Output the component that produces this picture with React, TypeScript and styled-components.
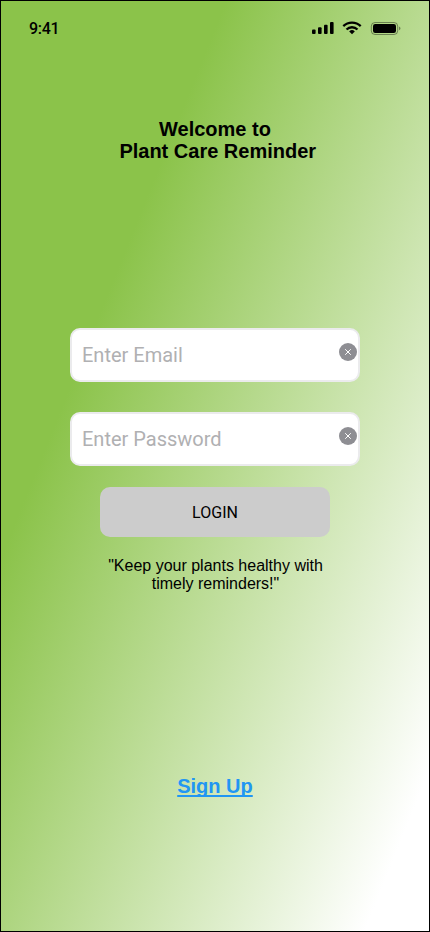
import React from "react";
import styled, { createGlobalStyle } from "styled-components";

const Global = createGlobalStyle`
  *{box-sizing:border-box}
  body{margin:0}
`;
const Screen = styled.main`
  width:430px;height:932px;border:1px solid #000;
  display:flex;flex-direction:column;align-items:center;
  font-family:"Liberation Sans",Arial,sans-serif;color:#000;
  background:linear-gradient(112deg,#8bc34a 28%,#fff 92%);
`;
const StatusBar = styled.header`
  width:100%;height:54px;padding:0 28px;display:flex;align-items:center;justify-content:space-between;
  font:500 16px/20px Roboto,sans-serif;
`;
const Time = styled.span`padding-top:1px;letter-spacing:-.3px;`;
const StatusIcons = styled.svg`display:block;`;
const Title = styled.h1`
  margin:63px 0 0;font-size:20px;line-height:22px;font-weight:700;text-align:center;
`;
const TitleLine = styled.span<{ $indent?: number }>`
  display:block;padding-left:${p => p.$indent ?? 0}px;
`;
const Form = styled.form`margin-top:166px;display:flex;flex-direction:column;align-items:center;`;
const Field = styled.label`
  width:290px;height:54px;margin-bottom:30px;padding:0 1px 0 10px;display:flex;align-items:center;
  border:2px solid #ebebed;border-radius:10px;background:#fff;
`;
const Input = styled.input`
  flex:1;min-width:0;border:0;outline:0;padding:0;background:transparent;font:20px Roboto,sans-serif;
  &::placeholder{color:#b0b0b2;opacity:1}
`;
const Clear = styled.svg`margin-bottom:6px;flex:none;`;
const Login = styled.button`
  width:230px;height:50px;margin-top:-9px;border:0;border-radius:10px;background:#ccc;color:#000;font:16px Roboto,sans-serif;
`;
const Quote = styled.p`margin:20px 0 0;padding-left:1px;width:231px;font-size:16px;line-height:18px;text-align:center;`;
const SignUp = styled.a`
  margin-top:181px;font-size:20px;line-height:24px;font-weight:700;color:#2196f3;
  text-decoration:underline;text-decoration-skip-ink:none;text-underline-offset:2px;
`;

function ClearIcon() {
  return (
    <Clear width="18" height="18" viewBox="0 0 18 18">
      <circle cx="9" cy="9" r="9" fill="#8e8e93" />
      <path d="M6.2 6.2l5.6 5.6M11.8 6.2l-5.6 5.6" stroke="#fff" strokeWidth="1" />
    </Clear>
  );
}

function DeviceStatus() {
  return (
    <StatusIcons width="89" height="14" viewBox="0 0 89 14">
      <rect x="0" y="8.5" width="3.6" height="4.5" rx="1" />
      <rect x="6" y="6.2" width="3.6" height="6.8" rx="1" />
      <rect x="12" y="3.7" width="3.6" height="9.3" rx="1" />
      <rect x="18" y="1" width="3.6" height="12" rx="1" />
      <g fill="none" stroke="#000" strokeWidth="2.3">
        <path d="M31.3 5.1a12.4 12.4 0 0 1 17.4 0" />
        <path d="M34.5 8.5a7.8 7.8 0 0 1 11 0" />
      </g>
      <path d="M37.2 10.4a4 4 0 0 1 5.6 0L40 13.2z" />
      <rect x="59.3" y="1.5" width="26.4" height="12" rx="3.7" fill="none" stroke="#000" strokeOpacity=".4" />
      <rect x="61" y="3" width="23" height="9" rx="2.2" />
      <path d="M87 5.5c2 .8 2 3 0 3.8z" fillOpacity=".4" />
    </StatusIcons>
  );
}

export default function App() {
  return (
    <>
      <Global />
      <Screen>
        <StatusBar><Time>9:41</Time><DeviceStatus /></StatusBar>
        <Title>
          <TitleLine>Welcome to</TitleLine>
          <TitleLine $indent={5.5}>Plant Care Reminder</TitleLine>
        </Title>
        <Form>
          <Field><Input placeholder="Enter Email" /><ClearIcon /></Field>
          <Field><Input placeholder="Enter Password" /><ClearIcon /></Field>
          <Login type="button">LOGIN</Login>
        </Form>
        <Quote>"Keep your plants healthy with timely reminders!"</Quote>
        <SignUp>Sign Up</SignUp>
      </Screen>
    </>
  );
}
